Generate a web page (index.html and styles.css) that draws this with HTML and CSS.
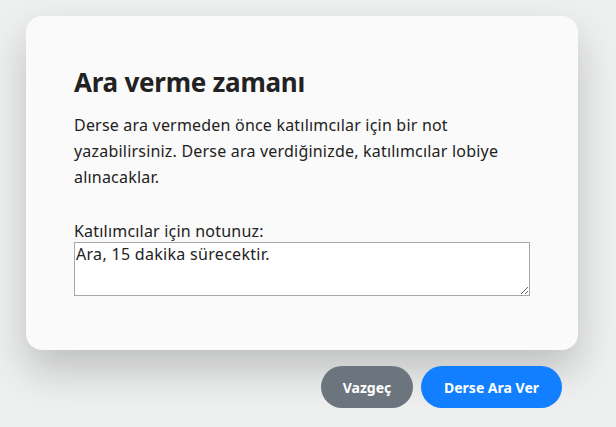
FILE: index.html
```html
<!DOCTYPE html>
<html lang="tr">
<head>
<meta charset="utf-8">
<link rel="stylesheet" href="styles.css">
</head>
<body>
<div class="modal">
  <h1 class="title">Ara verme zamanı</h1>
  <p class="desc">Derse ara vermeden önce katılımcılar için bir not yazabilirsiniz. Derse ara verdiğinizde, katılımcılar lobiye alınacaklar.</p>
  <label class="label" for="note">Katılımcılar için notunuz:</label>
  <textarea id="note" class="note">Ara, 15 dakika sürecektir.</textarea>
</div>
<div class="actions">
  <button class="btn btn-cancel">Vazgeç</button>
  <button class="btn btn-primary">Derse Ara Ver</button>
</div>
</body>
</html>
```
FILE: styles.css
```css
html, body {
  margin: 0;
  padding: 0;
  width: 616px;
  height: 427px;
  overflow: hidden;
  font-family: "Noto Sans", "Open Sans", sans-serif;
  color: #222;
}
body {
  background: #eeefef;
}
.modal {
  margin: 16px 0 0 26px;
  width: 552px;
  height: 334px;
  box-sizing: border-box;
  padding: 50px 48px 0 48px;
  background: #fafafa;
  border-radius: 16px;
  box-shadow: 0 20px 40px rgba(0,0,0,0.2);
}
.title {
  margin: 0 0 14px 0;
  font-size: 26px;
  font-weight: 700;
  line-height: 32px;
  letter-spacing: -0.25px;
  color: #222;
}
.desc {
  margin: 0 0 31px 0;
  max-width: 440px;
  font-size: 16px;
  line-height: 26px;
  letter-spacing: 0.2px;
  color: #222;
}
.label {
  display: block;
  font-size: 16px;
  line-height: 21px;
  letter-spacing: 0.2px;
  color: #222;
}
.note {
  display: block;
  width: 456px;
  height: 54px;
  box-sizing: border-box;
  margin: 0;
  padding: 1px 1px;
  border: 1px solid #a7a7a7;
  background: #fff;
  font-family: inherit;
  font-size: 16px;
  line-height: 21px;
  letter-spacing: 0.3px;
  color: #222;
  resize: vertical;
}
.actions {
  display: flex;
  justify-content: flex-end;
  gap: 8px;
  padding: 16px 54px 0 0;
}
.btn {
  height: 42px;
  border: none;
  border-radius: 21px;
  color: #fff;
  font-family: inherit;
  font-size: 14px;
  font-weight: 700;
  padding: 0 21px;
}
.btn-cancel {
  background: #6c757d;
  width: 92px;
}
.btn-primary {
  background: #117fff;
  width: 141px;
}
```
